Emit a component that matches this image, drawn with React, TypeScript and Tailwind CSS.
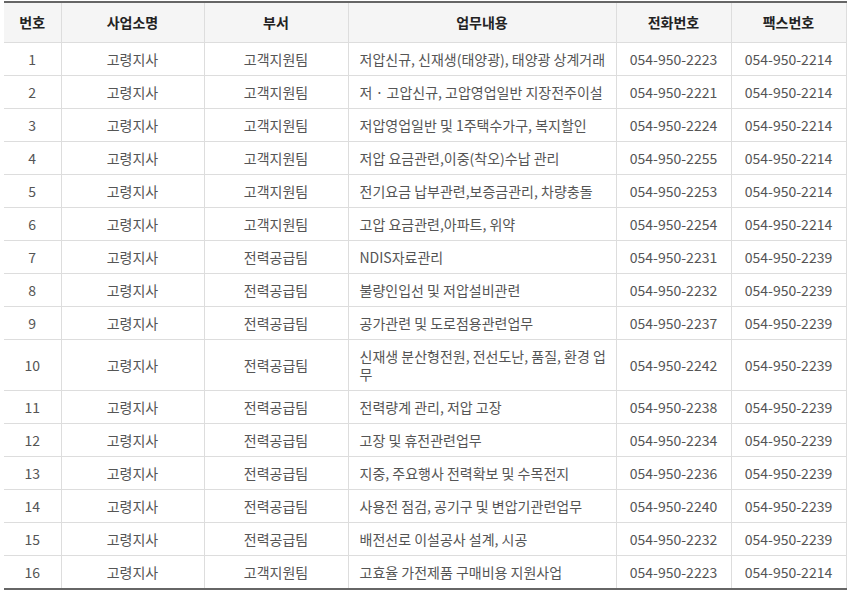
import React from "react";

const rows: [string, string, string, string, string, string][] = [
  ["1", "고령지사", "고객지원팀", "저압신규, 신재생(태양광), 태양광 상계거래", "054-950-2223", "054-950-2214"],
  ["2", "고령지사", "고객지원팀", "저 · 고압신규, 고압영업일반 지장전주이설", "054-950-2221", "054-950-2214"],
  ["3", "고령지사", "고객지원팀", "저압영업일반 및 1주택수가구, 복지할인", "054-950-2224", "054-950-2214"],
  ["4", "고령지사", "고객지원팀", "저압 요금관련,이중(착오)수납 관리", "054-950-2255", "054-950-2214"],
  ["5", "고령지사", "고객지원팀", "전기요금 납부관련,보증금관리, 차량충돌", "054-950-2253", "054-950-2214"],
  ["6", "고령지사", "고객지원팀", "고압 요금관련,아파트, 위약", "054-950-2254", "054-950-2214"],
  ["7", "고령지사", "전력공급팀", "NDIS자료관리", "054-950-2231", "054-950-2239"],
  ["8", "고령지사", "전력공급팀", "불량인입선 및 저압설비관련", "054-950-2232", "054-950-2239"],
  ["9", "고령지사", "전력공급팀", "공가관련 및 도로점용관련업무", "054-950-2237", "054-950-2239"],
  ["10", "고령지사", "전력공급팀", "신재생 분산형전원, 전선도난, 품질, 환경 업무", "054-950-2242", "054-950-2239"],
  ["11", "고령지사", "전력공급팀", "전력량계 관리, 저압 고장", "054-950-2238", "054-950-2239"],
  ["12", "고령지사", "전력공급팀", "고장 및 휴전관련업무", "054-950-2234", "054-950-2239"],
  ["13", "고령지사", "전력공급팀", "지중, 주요행사 전력확보 및 수목전지", "054-950-2236", "054-950-2239"],
  ["14", "고령지사", "전력공급팀", "사용전 점검, 공기구 및 변압기관련업무", "054-950-2240", "054-950-2239"],
  ["15", "고령지사", "전력공급팀", "배전선로 이설공사 설계, 시공", "054-950-2232", "054-950-2239"],
  ["16", "고령지사", "고객지원팀", "고효율 가전제품 구매비용 지원사업", "054-950-2223", "054-950-2214"],
];

const headers = ["번호", "사업소명", "부서", "업무내용", "전화번호", "팩스번호"];
const widths = ["w-[57px]", "w-[143px]", "w-[144px]", "w-[268px]", "w-[115px]", "w-[115px]"];

export default function App() {
  return (
    <div
      className="bg-white pl-[4px] pt-[1px] w-[849px] h-[591px] overflow-hidden"
      style={{ fontFamily: '"Noto Sans CJK KR", "Noto Sans", sans-serif' }}
    >
      <table className="w-[842px] table-fixed border-collapse border-t-2 border-b-2 border-t-[#666] border-b-[#666] text-[14px]">
        <colgroup>
          {widths.map((w, i) => (
            <col key={i} className={w} />
          ))}
        </colgroup>
        <thead>
          <tr className="bg-[#f5f5f5]">
            {headers.map((h, i) => (
              <th
                key={i}
                className="h-[40px] border-r border-b border-[#dddddd] font-bold text-[#222] text-center leading-[18px] p-0"
              >
                {h}
              </th>
            ))}
          </tr>
        </thead>
        <tbody>
          {rows.map((r, ri) => (
            <tr key={ri}>
              {r.map((c, ci) => (
                <td
                  key={ci}
                  className={
                    "border-r border-b border-[#dddddd] text-[#555] py-[7px] leading-[18px] " +
                    (ci === 3 ? "text-left pl-[11px] pr-[2px]" : "text-center px-[2px]")
                  }
                >
                  {c}
                </td>
              ))}
            </tr>
          ))}
        </tbody>
      </table>
    </div>
  );
}
